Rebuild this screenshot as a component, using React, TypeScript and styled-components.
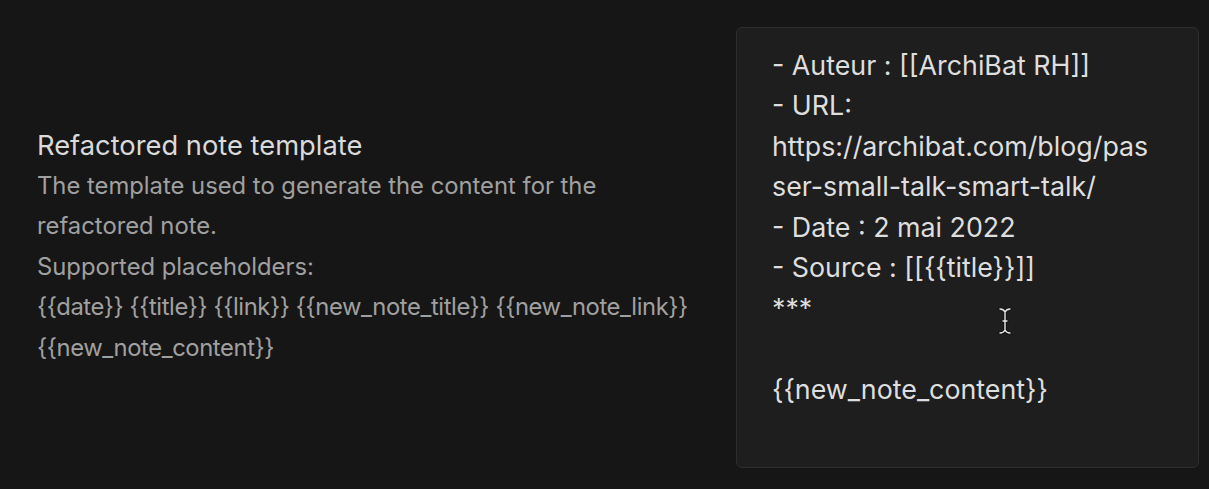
import React from "react";
import styled, { createGlobalStyle } from "styled-components";

const Global = createGlobalStyle`
  html, body { margin: 0; padding: 0; background: #161616; }
  body { font-family: Inter, "Noto Sans", sans-serif; -webkit-font-smoothing: antialiased; }
`;

const Page = styled.div`
  width: 1209px;
  height: 489px;
  box-sizing: border-box;
  padding: 27px 10px 22px 37px;
  display: flex;
  align-items: center;
  justify-content: space-between;
  background: #161616;
`;

const Info = styled.div`
  display: flex;
  flex-direction: column;
  width: 680px;
`;

const Title = styled.div`
  font-size: 27.3px;
  line-height: 40px;
  color: #dadada;
`;

const Desc = styled.div<{ $code?: boolean }>`
  font-size: 23.8px;
  line-height: 40.5px;
  color: #a0a0a0;
  letter-spacing: ${(p) => (p.$code ? "-0.4px" : "0")};
`;

const Editor = styled.div`
  position: relative;
  width: 463px;
  height: 441px;
  box-sizing: border-box;
  border: 1px solid #2e2e2e;
  border-radius: 6px;
  background: #1e1e1e;
  padding: 17px 36px 0 35px;
  overflow: hidden;
`;

const Content = styled.div`
  font-size: 26.8px;
  line-height: 40.5px;
  color: #dedede;
  white-space: pre-wrap;
  overflow-wrap: anywhere;
`;

const Cursor = styled.svg`
  position: absolute;
  left: 261px;
  top: 279px;
`;

const text = `- Auteur : [[ArchiBat RH]]
- URL:
https://archibat.com/blog/passer-small-talk-smart-talk/
- Date : 2 mai 2022
- Source : [[{{title}}]]
***

{{new_note_content}}`;

const beam =
  "M2 2 C4 2 6 3 7 5 C8 3 10 2 12 2 M7 5 L7 23 M2 26 C4 26 6 25 7 23 C8 25 10 26 12 26 M5 14 L9 14";

export default function App() {
  return (
    <>
      <Global />
      <Page>
        <Info>
          <Title>Refactored note template</Title>
          <Desc>The template used to generate the content for the</Desc>
          <Desc>refactored note.</Desc>
          <Desc>Supported placeholders:</Desc>
          <Desc $code>{"{{date}} {{title}} {{link}} {{new_note_title}} {{new_note_link}}"}</Desc>
          <Desc $code>{"{{new_note_content}}"}</Desc>
        </Info>
        <Editor>
          <Content>{text}</Content>
          <Cursor width="14" height="28" viewBox="0 0 14 28">
            <path d={beam} fill="none" stroke="#111" strokeWidth="3.2" strokeLinecap="round" />
            <path d={beam} fill="none" stroke="#e8e8e8" strokeWidth="1.4" strokeLinecap="round" />
          </Cursor>
        </Editor>
      </Page>
    </>
  );
}
